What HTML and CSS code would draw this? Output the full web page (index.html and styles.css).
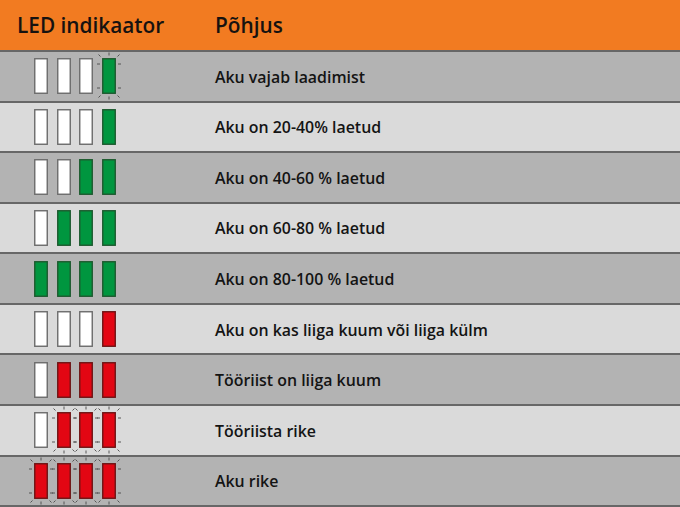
FILE: index.html
```html
<!DOCTYPE html>
<html lang="et">
<head>
<meta charset="utf-8">
<link rel="stylesheet" href="styles.css">
</head>
<body>
<svg class="defs" width="0" height="0" aria-hidden="true">
  <defs>
    <g id="ticks" fill="none" stroke="#4a4a4a" stroke-width="0.9">
      <path d="M7 -2.5V-5.5 M7 38.5V41.5 M-2 6H-5 M-2 30H-5 M16 6H19 M16 30H19 M-1.5 -1.5L-3.5 -3.5 M15.5 -1.5L17.5 -3.5 M-1.5 37.5L-3.5 39.5 M15.5 37.5L17.5 39.5"/>
    </g>
  </defs>
</svg>
<div class="table">
  <div class="head">
    <div class="c1">LED indikaator</div>
    <div class="c2">Põhjus</div>
  </div>

  <div class="row dark">
    <div class="leds">
      <svg class="led" viewBox="0 0 14 36"><rect class="off" x="0.75" y="0.75" width="12.5" height="34.5"/></svg>
      <svg class="led" viewBox="0 0 14 36"><rect class="off" x="0.75" y="0.75" width="12.5" height="34.5"/></svg>
      <svg class="led" viewBox="0 0 14 36"><rect class="off" x="0.75" y="0.75" width="12.5" height="34.5"/></svg>
      <svg class="led" viewBox="0 0 14 36"><rect class="green" x="0.75" y="0.75" width="12.5" height="34.5"/><use href="#ticks"/></svg>
    </div>
    <div class="txt">Aku vajab laadimist</div>
  </div>

  <div class="row light">
    <div class="leds">
      <svg class="led" viewBox="0 0 14 36"><rect class="off" x="0.75" y="0.75" width="12.5" height="34.5"/></svg>
      <svg class="led" viewBox="0 0 14 36"><rect class="off" x="0.75" y="0.75" width="12.5" height="34.5"/></svg>
      <svg class="led" viewBox="0 0 14 36"><rect class="off" x="0.75" y="0.75" width="12.5" height="34.5"/></svg>
      <svg class="led" viewBox="0 0 14 36"><rect class="green" x="0.75" y="0.75" width="12.5" height="34.5"/></svg>
    </div>
    <div class="txt">Aku on 20-40% laetud</div>
  </div>

  <div class="row dark">
    <div class="leds">
      <svg class="led" viewBox="0 0 14 36"><rect class="off" x="0.75" y="0.75" width="12.5" height="34.5"/></svg>
      <svg class="led" viewBox="0 0 14 36"><rect class="off" x="0.75" y="0.75" width="12.5" height="34.5"/></svg>
      <svg class="led" viewBox="0 0 14 36"><rect class="green" x="0.75" y="0.75" width="12.5" height="34.5"/></svg>
      <svg class="led" viewBox="0 0 14 36"><rect class="green" x="0.75" y="0.75" width="12.5" height="34.5"/></svg>
    </div>
    <div class="txt">Aku on 40-60 % laetud</div>
  </div>

  <div class="row light">
    <div class="leds">
      <svg class="led" viewBox="0 0 14 36"><rect class="off" x="0.75" y="0.75" width="12.5" height="34.5"/></svg>
      <svg class="led" viewBox="0 0 14 36"><rect class="green" x="0.75" y="0.75" width="12.5" height="34.5"/></svg>
      <svg class="led" viewBox="0 0 14 36"><rect class="green" x="0.75" y="0.75" width="12.5" height="34.5"/></svg>
      <svg class="led" viewBox="0 0 14 36"><rect class="green" x="0.75" y="0.75" width="12.5" height="34.5"/></svg>
    </div>
    <div class="txt">Aku on 60-80 % laetud</div>
  </div>

  <div class="row dark">
    <div class="leds">
      <svg class="led" viewBox="0 0 14 36"><rect class="green" x="0.75" y="0.75" width="12.5" height="34.5"/></svg>
      <svg class="led" viewBox="0 0 14 36"><rect class="green" x="0.75" y="0.75" width="12.5" height="34.5"/></svg>
      <svg class="led" viewBox="0 0 14 36"><rect class="green" x="0.75" y="0.75" width="12.5" height="34.5"/></svg>
      <svg class="led" viewBox="0 0 14 36"><rect class="green" x="0.75" y="0.75" width="12.5" height="34.5"/></svg>
    </div>
    <div class="txt">Aku on 80-100 % laetud</div>
  </div>

  <div class="row light">
    <div class="leds">
      <svg class="led" viewBox="0 0 14 36"><rect class="off" x="0.75" y="0.75" width="12.5" height="34.5"/></svg>
      <svg class="led" viewBox="0 0 14 36"><rect class="off" x="0.75" y="0.75" width="12.5" height="34.5"/></svg>
      <svg class="led" viewBox="0 0 14 36"><rect class="off" x="0.75" y="0.75" width="12.5" height="34.5"/></svg>
      <svg class="led" viewBox="0 0 14 36"><rect class="red" x="0.75" y="0.75" width="12.5" height="34.5"/></svg>
    </div>
    <div class="txt">Aku on kas liiga kuum või liiga külm</div>
  </div>

  <div class="row dark">
    <div class="leds">
      <svg class="led" viewBox="0 0 14 36"><rect class="off" x="0.75" y="0.75" width="12.5" height="34.5"/></svg>
      <svg class="led" viewBox="0 0 14 36"><rect class="red" x="0.75" y="0.75" width="12.5" height="34.5"/></svg>
      <svg class="led" viewBox="0 0 14 36"><rect class="red" x="0.75" y="0.75" width="12.5" height="34.5"/></svg>
      <svg class="led" viewBox="0 0 14 36"><rect class="red" x="0.75" y="0.75" width="12.5" height="34.5"/></svg>
    </div>
    <div class="txt">Tööriist on liiga kuum</div>
  </div>

  <div class="row light">
    <div class="leds">
      <svg class="led" viewBox="0 0 14 36"><rect class="off" x="0.75" y="0.75" width="12.5" height="34.5"/></svg>
      <svg class="led" viewBox="0 0 14 36"><rect class="red" x="0.75" y="0.75" width="12.5" height="34.5"/><use href="#ticks"/></svg>
      <svg class="led" viewBox="0 0 14 36"><rect class="red" x="0.75" y="0.75" width="12.5" height="34.5"/><use href="#ticks"/></svg>
      <svg class="led" viewBox="0 0 14 36"><rect class="red" x="0.75" y="0.75" width="12.5" height="34.5"/><use href="#ticks"/></svg>
    </div>
    <div class="txt">Tööriista rike</div>
  </div>

  <div class="row dark last">
    <div class="leds">
      <svg class="led" viewBox="0 0 14 36"><rect class="red" x="0.75" y="0.75" width="12.5" height="34.5"/><use href="#ticks"/></svg>
      <svg class="led" viewBox="0 0 14 36"><rect class="red" x="0.75" y="0.75" width="12.5" height="34.5"/><use href="#ticks"/></svg>
      <svg class="led" viewBox="0 0 14 36"><rect class="red" x="0.75" y="0.75" width="12.5" height="34.5"/><use href="#ticks"/></svg>
      <svg class="led" viewBox="0 0 14 36"><rect class="red" x="0.75" y="0.75" width="12.5" height="34.5"/><use href="#ticks"/></svg>
    </div>
    <div class="txt">Aku rike</div>
  </div>
</div>
</body>
</html>
```
FILE: styles.css
```css
* { box-sizing: border-box; }
html, body {
  margin: 0;
  padding: 0;
  width: 680px;
  height: 507px;
  overflow: hidden;
  background: #b3b3b3;
}
.defs { position: absolute; width: 0; height: 0; }
.table {
  display: flex;
  flex-direction: column;
  width: 680px;
  height: 507px;
  font-family: "Open Sans", Lato, sans-serif;
}
.head {
  height: 50px;
  flex: 0 0 50px;
  background: #f27b21;
  display: grid;
  grid-template-columns: 215px 1fr;
  align-items: center;
  font-weight: 600;
  font-size: 20.8px;
  color: #161210;
}
.head .c1 { padding-left: 17px; }
.row {
  flex: 1 1 0;
  display: grid;
  grid-template-columns: 215px 1fr;
  align-items: center;
  border-top: 2px solid #676767;
}
.row.last { border-bottom: 2px solid #676767; }
.row.dark { background: #b3b3b3; }
.row.light { background: #dadada; }
.leds {
  display: flex;
  gap: 8.5px;
  padding-left: 34px;
  align-items: center;
}
.led {
  width: 14px;
  height: 36px;
  overflow: visible;
  display: block;
}
.led rect { stroke-width: 1.4; }
.led .off { fill: #ffffff; stroke: #6b6b6b; }
.led .green { fill: #00963f; stroke: #1d5a2f; }
.led .red { fill: #e30613; stroke: #6e1414; }
.txt {
  font-size: 15.9px;
  font-weight: 600;
  color: #141414;
  padding-top: 1px;
}
```
